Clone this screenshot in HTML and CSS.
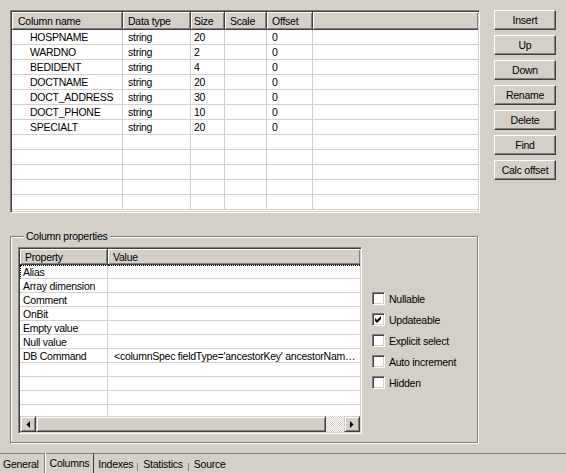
FILE: index.html
```html
<!DOCTYPE html>
<html lang="en">
<head>
  <meta charset="utf-8">
  <title>Table columns</title>
  <link rel="stylesheet" href="styles.css">
</head>
<body>

<div class="window">

  <div class="top">
    <div class="grid">
      <table class="cols">
        <thead>
          <tr>
            <th class="c-name">Column name</th>
            <th class="c-type">Data type</th>
            <th class="c-size">Size</th>
            <th class="c-scale">Scale</th>
            <th class="c-off">Offset</th>
            <th class="c-rest"></th>
          </tr>
        </thead>
        <tbody>
          <tr><td class="name">HOSPNAME</td><td>string</td><td class="num">20</td><td></td><td>0</td><td></td></tr>
          <tr><td class="name">WARDNO</td><td>string</td><td class="num">2</td><td></td><td>0</td><td></td></tr>
          <tr><td class="name">BEDIDENT</td><td>string</td><td class="num">4</td><td></td><td>0</td><td></td></tr>
          <tr><td class="name">DOCTNAME</td><td>string</td><td class="num">20</td><td></td><td>0</td><td></td></tr>
          <tr><td class="name">DOCT_ADDRESS</td><td>string</td><td class="num">30</td><td></td><td>0</td><td></td></tr>
          <tr><td class="name">DOCT_PHONE</td><td>string</td><td class="num">10</td><td></td><td>0</td><td></td></tr>
          <tr><td class="name">SPECIALT</td><td>string</td><td class="num">20</td><td></td><td>0</td><td></td></tr>
          <tr><td></td><td></td><td></td><td></td><td></td><td></td></tr>
          <tr><td></td><td></td><td></td><td></td><td></td><td></td></tr>
          <tr><td></td><td></td><td></td><td></td><td></td><td></td></tr>
          <tr><td></td><td></td><td></td><td></td><td></td><td></td></tr>
          <tr><td></td><td></td><td></td><td></td><td></td><td></td></tr>
        </tbody>
      </table>
    </div>

    <div class="buttons">
      <button class="btn">Insert</button>
      <button class="btn">Up</button>
      <button class="btn">Down</button>
      <button class="btn">Rename</button>
      <button class="btn">Delete</button>
      <button class="btn">Find</button>
      <button class="btn">Calc offset</button>
    </div>
  </div>

  <div class="groupbox">
    <div class="legend">Column properties</div>
    <div class="gb-body">

      <div class="pgrid">
        <div class="pgrid-view">
          <table class="props">
            <thead>
              <tr><th class="p-key">Property</th><th class="p-val">Value</th></tr>
            </thead>
            <tbody>
              <tr class="focus"><td>Alias</td><td></td></tr>
              <tr><td>Array dimension</td><td></td></tr>
              <tr><td>Comment</td><td></td></tr>
              <tr><td>OnBit</td><td></td></tr>
              <tr><td>Empty value</td><td></td></tr>
              <tr><td>Null value</td><td></td></tr>
              <tr><td>DB Command</td><td>&lt;columnSpec fieldType='ancestorKey' ancestorName='HOSPNAME' /&gt;</td></tr>
              <tr><td></td><td></td></tr>
              <tr><td></td><td></td></tr>
              <tr><td></td><td></td></tr>
              <tr><td></td><td></td></tr>
            </tbody>
          </table>
        </div>
        <div class="hscroll">
          <div class="sb-btn">
            <svg width="4" height="7" viewBox="0 0 4 7"><polygon points="4,0 4,7 0.5,3.5" fill="#000"/></svg>
          </div>
          <div class="sb-thumb"></div>
          <div class="sb-track"></div>
          <div class="sb-btn">
            <svg width="4" height="7" viewBox="0 0 4 7"><polygon points="0,0 0,7 3.5,3.5" fill="#000"/></svg>
          </div>
        </div>
      </div>

      <div class="checks">
        <label class="check"><span class="box"></span>Nullable</label>
        <label class="check"><span class="box"><svg width="7" height="7" viewBox="0 0 7 7"><polygon points="0,2 2,4 6,0 6,3 2,7 0,5" fill="#000"/></svg></span>Updateable</label>
        <label class="check"><span class="box"></span>Explicit select</label>
        <label class="check"><span class="box"></span>Auto increment</label>
        <label class="check"><span class="box"></span>Hidden</label>
      </div>

    </div>
  </div>

  <div class="tabs">
    <div class="tab">General</div>
    <div class="tab active">Columns</div>
    <div class="tab">Indexes</div>
    <div class="tab sep">Statistics</div>
    <div class="tab sep">Source</div>
  </div>

</div>

</body>
</html>
```

FILE: styles.css
```css
body {
  margin: 0;
  background: #d4d0c8;
  font-family: "Liberation Sans", Arial, sans-serif;
  font-size: 10.5px;
  letter-spacing: -0.25px;
  color: #000;
  overflow: hidden;
}

.window {
  width: 566px;
  height: 473px;
  padding-top: 10px;
  box-sizing: border-box;
}

/* Column list + buttons */
.top {
  display: flex;
  align-items: flex-start;
  padding-left: 10px;
}

.grid {
  width: 470px;
  height: 203px;
  box-sizing: border-box;
  background: #fff;
  border: 1px solid;
  border-color: #808080 #fff #fff #808080;
  box-shadow: inset 1px 1px #404040, inset -1px -1px #d4d0c8;
  padding: 1px;
  overflow: hidden;
}

.cols {
  table-layout: fixed;
  border-collapse: separate;
  border-spacing: 0;
  width: 466px;
}

.cols th {
  box-sizing: border-box;
  height: 18px;
  padding: 0 0 0 5px;
  background: #d4d0c8;
  font-weight: normal;
  text-align: left;
  white-space: nowrap;
  border-right: 1px solid #404040;
  border-bottom: 1px solid #404040;
  box-shadow: inset 1px 1px #fff, inset -1px -1px #808080;
}

.cols th.c-name { width: 111px; padding-left: 6px; }
.cols th.c-type { width: 68px; }
.cols th.c-size { width: 34px; padding-left: 3px; }
.cols th.c-scale { width: 42px; }
.cols th.c-off { width: 46px; }
.cols th.c-rest { border-right: 0; }

.cols td {
  box-sizing: border-box;
  height: 15px;
  padding: 0 0 0 5px;
  border-right: 1px solid #d4d0c8;
  border-bottom: 1px solid #d4d0c8;
  white-space: nowrap;
}

.cols td.name { padding-left: 18px; }
.cols td.num { padding-left: 3px; }
.cols td:last-child { border-right: 0; }

.buttons {
  display: flex;
  flex-direction: column;
  gap: 5px;
  margin-left: 14px;
}

.btn {
  width: 62px;
  height: 20px;
  padding: 0;
  margin: 0;
  font: inherit;
  letter-spacing: inherit;
  color: #000;
  background: #d4d0c8;
  border: 1px solid;
  border-color: #fff #404040 #404040 #fff;
  box-shadow: inset -1px -1px #808080;
  border-radius: 0;
}

/* Column properties group */
.groupbox {
  margin: 23px 0 0 10px;
  width: 468px;
  height: 207px;
  box-sizing: border-box;
  border: 1px solid #808080;
  box-shadow: inset 1px 1px #fff, 1px 1px #fff;
  padding-left: 7px;
}

.legend {
  display: table;
  margin: -7px 0 0 6px;
  padding: 0 2px;
  line-height: 13px;
  background: #d4d0c8;
}

.gb-body {
  display: flex;
  margin-top: 4px;
}

.pgrid {
  width: 344px;
  height: 187px;
  box-sizing: border-box;
  background: #fff;
  border: 1px solid;
  border-color: #808080 #fff #fff #808080;
  box-shadow: inset 1px 1px #404040, inset -1px -1px #d4d0c8;
  padding: 1px;
  display: flex;
  flex-direction: column;
}

.pgrid-view {
  flex: 1;
  overflow: hidden;
}

.props {
  table-layout: fixed;
  border-collapse: separate;
  border-spacing: 0;
  width: 340px;
}

.props th {
  box-sizing: border-box;
  height: 16px;
  padding: 0 0 0 5px;
  background: #d4d0c8;
  font-weight: normal;
  text-align: left;
  border-right: 1px solid #404040;
  border-bottom: 1px solid #404040;
  box-shadow: inset 1px 1px #fff, inset -1px -1px #808080;
}

.props th.p-key { width: 88px; }
.props th.p-val { border-right: 0; }

.props td {
  box-sizing: border-box;
  height: 14px;
  padding: 0 0 0 3px;
  border-right: 1px solid #d4d0c8;
  border-bottom: 1px solid #d4d0c8;
  white-space: nowrap;
  overflow: hidden;
  text-overflow: ellipsis;
}

.props td + td {
  padding-left: 6px;
  padding-right: 3px;
  border-right: 0;
}

.props tr.focus td {
  border-top: 1px dotted #000;
}

.props tr.focus td:first-child {
  border-left: 1px dotted #000;
  padding-left: 2px;
}

.hscroll {
  display: flex;
  height: 16px;
}

.sb-btn,
.sb-thumb {
  box-sizing: border-box;
  height: 16px;
  background: #d4d0c8;
  border: 1px solid;
  border-color: #d4d0c8 #404040 #404040 #d4d0c8;
  box-shadow: inset 1px 1px #fff, inset -1px -1px #808080;
}

.sb-btn {
  width: 16px;
  display: flex;
  align-items: center;
  justify-content: center;
}

.sb-thumb {
  flex: 1;
}

.sb-track {
  width: 18px;
  background: repeating-conic-gradient(#fff 0 25%, #d4d0c8 0 50%) 0 0 / 2px 2px;
}

.checks {
  display: flex;
  flex-direction: column;
  gap: 8px;
  margin-left: 10px;
  padding-top: 45px;
}

.check {
  display: flex;
  align-items: center;
  gap: 4px;
  height: 13px;
  white-space: nowrap;
}

.box {
  width: 13px;
  height: 13px;
  box-sizing: border-box;
  background: #fff;
  border: 1px solid;
  border-color: #808080 #fff #fff #808080;
  box-shadow: inset 1px 1px #404040, inset -1px -1px #d4d0c8;
  display: flex;
  align-items: center;
  justify-content: center;
}

/* Bottom tabs */
.tabs {
  display: flex;
  margin-top: 10px;
  height: 20px;
  border-top: 1px solid #808080;
  box-sizing: border-box;
}

.tab {
  padding: 0 4px;
  line-height: 20px;
  border-right: 1px solid transparent;
}

.tab:first-child {
  padding: 0 5px 0 3px;
  border-right: 1px solid #808080;
}

.tab.active {
  border-left: 1px solid #fff;
  border-right: 1px solid #404040;
  margin-top: -1px;
  line-height: 21px;
}

.tab.sep {
  padding-left: 5px;
  padding-right: 5px;
  position: relative;
}

.tab.sep::before {
  content: "";
  position: absolute;
  left: -1px;
  top: 9px;
  width: 1px;
  height: 8px;
  background: #808080;
}
```
